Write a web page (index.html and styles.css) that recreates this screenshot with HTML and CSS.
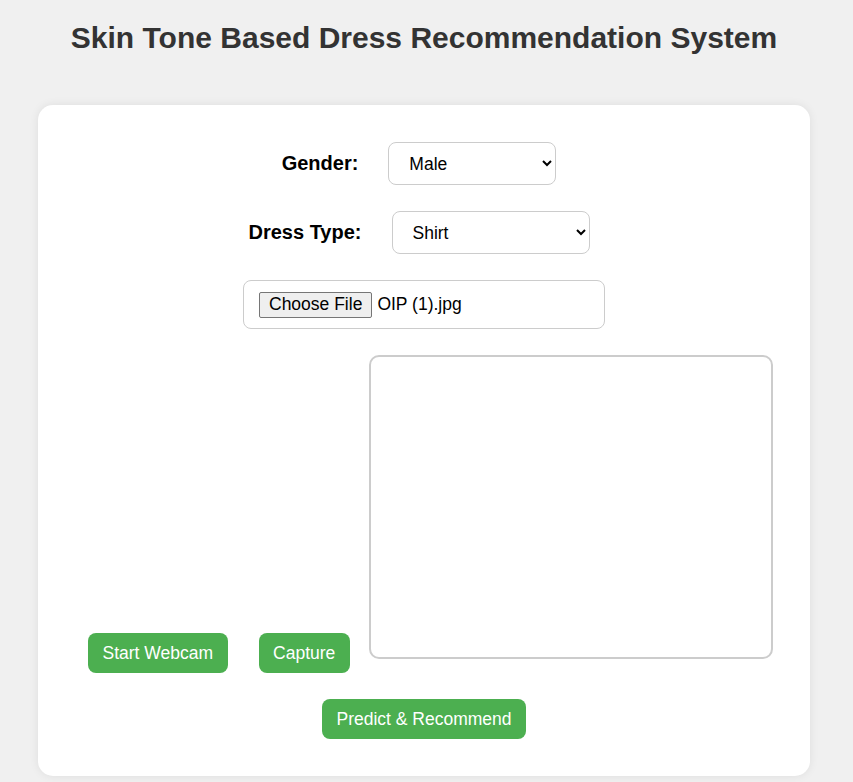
FILE: index.html
```html
<!DOCTYPE html>
<html lang="en">
<head>
<meta charset="utf-8">
<title>Skin Tone Based Dress Recommendation System</title>
<link rel="stylesheet" href="styles.css">
</head>
<body>
<h1 class="title">Skin Tone Based Dress Recommendation System</h1>
<div class="card">
  <div class="form-row">
    <label class="field-label" for="gender">Gender:</label>
    <select id="gender" class="select select-gender">
      <option>Male</option>
      <option>Female</option>
    </select>
  </div>
  <div class="form-row">
    <label class="field-label" for="dress">Dress Type:</label>
    <select id="dress" class="select select-dress">
      <option>Shirt</option>
      <option>T-Shirt</option>
      <option>Kurta</option>
    </select>
  </div>
  <div class="form-row">
    <div class="file-box">
      <span class="file-btn">Choose File</span>
      <span class="file-name">OIP (1).jpg</span>
    </div>
  </div>
  <div class="cam-row">
    <button class="btn btn-webcam">Start Webcam</button>
    <button class="btn btn-capture">Capture</button>
    <canvas class="preview" width="400" height="300"></canvas>
  </div>
  <div class="form-row">
    <button class="btn">Predict &amp; Recommend</button>
  </div>
</div>
</body>
</html>
```
FILE: styles.css
```css
html, body {
  margin: 0;
  padding: 0;
}
body {
  background: #f0f0f0;
  font-family: "Liberation Sans", Arial, sans-serif;
  color: #000;
  padding: 20px 43px 6px 38px;
}
.title {
  margin: 0 0 50px 0;
  text-align: center;
  font-size: 30px;
  font-weight: bold;
  color: #333;
  line-height: 35px;
}
.card {
  background: #fff;
  border-radius: 15px;
  box-shadow: 0 0 10px rgba(0, 0, 0, 0.08);
  padding: 37px 0;
  display: flex;
  flex-direction: column;
  gap: 26px;
}
.form-row {
  display: flex;
  justify-content: center;
  align-items: center;
}
.field-label {
  font-size: 20px;
  font-weight: bold;
  margin-right: 30px;
}
.select {
  box-sizing: border-box;
  height: 43px;
  font-family: "Liberation Sans", Arial, sans-serif;
  font-size: 17.5px;
  color: #000;
  background: #fff;
  border: 1px solid #ccc;
  border-radius: 8px;
  padding: 0 4px 0 16px;
  margin-right: 10px;
}
.select-gender { width: 168px; }
.select-dress { width: 198px; }
.file-box {
  box-sizing: border-box;
  width: 362px;
  height: 49px;
  border: 1px solid #ccc;
  border-radius: 8px;
  padding: 0 15px;
  display: flex;
  align-items: center;
  font-size: 17.5px;
}
.file-btn {
  box-sizing: border-box;
  height: 26px;
  display: inline-flex;
  align-items: center;
  padding: 0 9px;
  background: #efefef;
  border: 1px solid #767676;
  border-radius: 2px;
  margin-right: 5px;
}
.cam-row {
  display: flex;
  align-items: flex-end;
  padding-left: 50px;
}
.btn {
  font-family: "Liberation Sans", Arial, sans-serif;
  font-size: 17.5px;
  line-height: 20px;
  color: #fff;
  background: #4caf50;
  border: none;
  border-radius: 8px;
  padding: 10px 14.5px;
}
.btn-webcam { margin-right: 31px; }
.btn-capture { margin-right: 19px; }
.preview {
  display: block;
  width: 400px;
  height: 300px;
  border: 2px solid #ccc;
  border-radius: 10px;
  margin-bottom: 14px;
}
```
